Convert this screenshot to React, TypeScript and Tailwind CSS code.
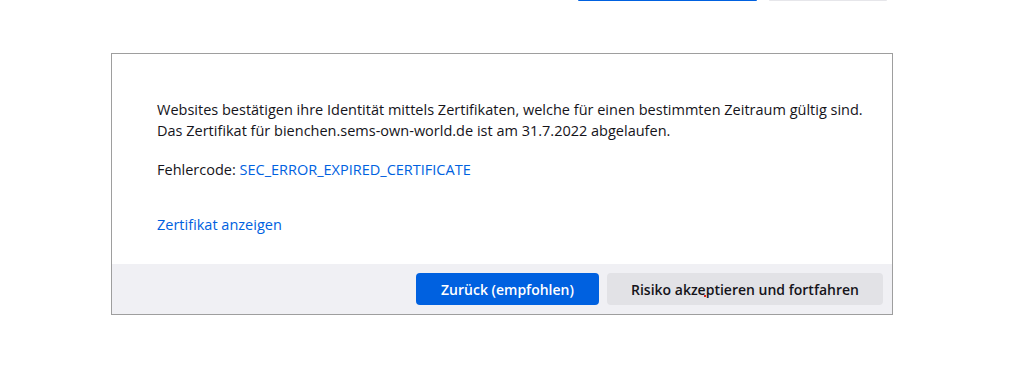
import React from "react";

export default function App() {
  return (
    <div
      className="relative w-[1022px] h-[392px] bg-white text-[#15141a] overflow-hidden"
      style={{ fontFamily: '"Open Sans", "Noto Sans", sans-serif' }}
    >
      {/* Cut-off buttons of the page above */}
      <div className="flex h-px pl-[578px] gap-[12px]">
        <div className="w-[179px] h-px bg-[#0061e0] rounded-b" />
        <div className="w-[118px] h-px bg-[#e6e6ea] rounded-b" />
      </div>

      {/* Advanced panel */}
      <div className="mt-[52px] ml-[111px] w-[782px] border border-[#9e9e9e] bg-white">
        <div className="pl-[45px] pt-[45px] pb-[29px] text-[14.5px] leading-[21px]">
          <p>
            Websites bestätigen ihre Identität mittels Zertifikaten, welche für einen bestimmten Zeitraum gültig sind.
          </p>
          <p>Das Zertifikat für bienchen.sems-own-world.de ist am 31.7.2022 abgelaufen.</p>
          <p className="mt-[18px]">
            Fehlercode:{" "}
            <a href="#" className="text-[#0061e0]">
              SEC_ERROR_EXPIRED_CERTIFICATE
            </a>
          </p>
          <p className="mt-[34px]">
            <a href="#" className="text-[#0061e0]">
              Zertifikat anzeigen
            </a>
          </p>
        </div>

        <div className="relative flex justify-end gap-[8px] bg-[#f0f0f4] py-[9px] pr-[9px]">
          <button className="w-[183px] h-[32px] rounded bg-[#0061e0] text-white text-[14px] font-semibold">
            Zurück (empfohlen)
          </button>
          <button className="w-[276px] h-[32px] rounded bg-[#e2e2e6] text-[#15141a] text-[14px] font-semibold">
            Risiko akzeptieren und fortfahren
          </button>
          <span className="absolute left-[592px] top-[31px] w-[2px] h-[2px] bg-[#e02020]" />
        </div>
      </div>
    </div>
  );
}
